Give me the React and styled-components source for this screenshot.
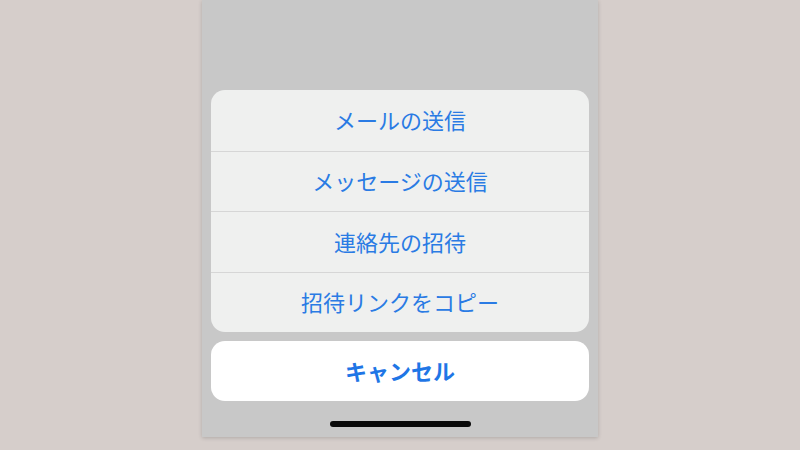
import styled, { createGlobalStyle } from 'styled-components';

const Global = createGlobalStyle`
  html, body {
    margin: 0;
    padding: 0;
    background: #d6cecb;
  }
  body {
    font-family: "Noto Sans CJK JP", "Noto Sans", sans-serif;
  }
`

const Page = styled.div`
  width: 800px;
  height: 450px;
  display: flex;
  justify-content: center;
  align-items: flex-start;
  overflow: hidden;
`

const Phone = styled.div`
  width: 396px;
  height: 437px;
  background: #c8c8c8;
  box-shadow: 0 1px 4px rgba(0, 0, 0, 0.18);
  display: flex;
  flex-direction: column;
  justify-content: flex-end;
  padding: 0 9px;
  box-sizing: border-box;
`

const Sheet = styled.div`
  background: #eff0ef;
  border-radius: 14px;
  overflow: hidden;
  display: flex;
  flex-direction: column;
`

const Action = styled.div`
  height: 60.5px;
  display: flex;
  align-items: center;
  justify-content: center;
  padding-bottom: 2px;
  box-sizing: border-box;
  color: #2a7be4;
  font-size: 22px;
  font-weight: ${p => (p.$bold ? 700 : 400)};
  border-top: ${p => (p.$first ? 'none' : '1px solid #d6d6d6')};
`

const Cancel = styled(Action)`
  height: 60px;
  margin-top: 9px;
  background: #fff;
  border-radius: 14px;
  border-top: none;
  color: #1f76e6;
`

const HomeBar = styled.div`
  width: 141px;
  height: 6px;
  border-radius: 3px;
  background: #0a0a0a;
  align-self: center;
  margin: 20px 0 10px;
`

const items = ['メールの送信', 'メッセージの送信', '連絡先の招待', '招待リンクをコピー']

export default function App() {
  return (
    <Page>
      <Global />
      <Phone>
        <Sheet>
          {items.map((t, i) => (
            <Action key={t} $first={i === 0}>{t}</Action>
          ))}
        </Sheet>
        <Cancel $bold>キャンセル</Cancel>
        <HomeBar />
      </Phone>
    </Page>
  )
}
